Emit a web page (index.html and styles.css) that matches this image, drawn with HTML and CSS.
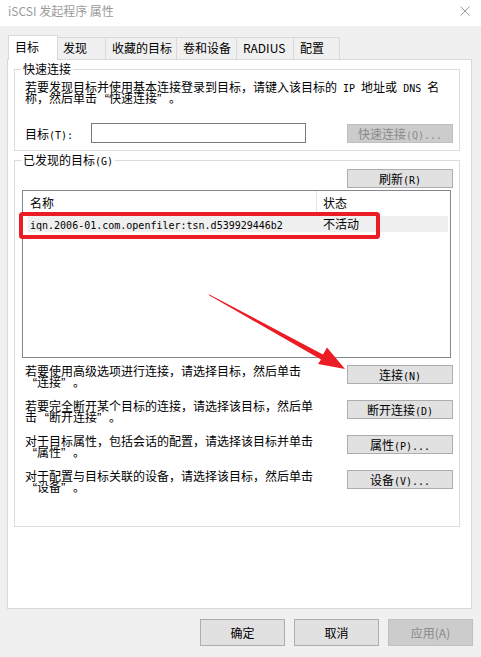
FILE: index.html
```html
<!DOCTYPE html>
<html lang="zh-CN">

<head>
  <meta charset="UTF-8">
  <meta name="viewport" content="width=device-width, initial-scale=1.0">
  <title>iSCSI 发起程序 属性</title>
  <link rel="stylesheet" href="styles.css">
</head>

<body>
  <div class="titlebar">
    <span class="title">iSCSI 发起程序 属性</span>
    <svg class="close" width="10" height="10" viewBox="0 0 10 10">
      <path d="M0.5 0.5 L9.5 9.5 M9.5 0.5 L0.5 9.5" stroke="#9a9a9a" stroke-width="1" fill="none" />
    </svg>
  </div>

  <div class="dialog">
    <div class="tabs">
      <div class="tab active">目标</div>
      <div class="tab t-find">发现</div>
      <div class="tab t-fav">收藏的目标</div>
      <div class="tab t-vol">卷和设备</div>
      <div class="tab t-radius">RADIUS</div>
      <div class="tab t-conf">配置</div>
    </div>

    <div class="panel">
      <fieldset class="group">
        <legend>快速连接</legend>
        <div class="quick-body">
          <p class="lines">若要发现目标并使用基本连接登录到目标，请键入该目标的<span class="en"> IP </span>地址或<span class="en"> DNS </span>名<br>称，然后单击<span class="q ql">“</span>快速连接<span class="q qr">”</span>。</p>
          <div class="quick-row">
            <span class="label">目标<span class="en">(T):</span></span>
            <input type="text" class="target-input">
            <button class="btn off">快速连接<span class="en">(Q)...</span></button>
          </div>
        </div>
      </fieldset>

      <fieldset class="group">
        <legend>已发现的目标<span class="en">(G)</span></legend>
        <div class="found-body">
          <div class="refresh-row">
            <button class="btn">刷新<span class="en">(R)</span></button>
          </div>

          <div class="list">
            <div class="list-head">
              <div class="col-name">名称</div>
              <div class="col-state">状态</div>
            </div>
            <div class="list-row">
              <div class="col-name"><span class="en">iqn.2006-01.com.openfiler:tsn.d539929446b2</span></div>
              <div class="col-state">不活动</div>
            </div>
          </div>

          <div class="actions">
            <div class="action">
              <p class="lines">若要使用高级选项进行连接，请选择目标，然后单击<br><span class="q ql">“</span>连接<span class="q qr">”</span>。</p>
              <button class="btn">连接<span class="en">(N)</span></button>
            </div>
            <div class="action">
              <p class="lines">若要完全断开某个目标的连接，请选择该目标，然后单<br>击<span class="q ql">“</span>断开连接<span class="q qr">”</span>。</p>
              <button class="btn">断开连接<span class="en">(D)</span></button>
            </div>
            <div class="action">
              <p class="lines">对于目标属性，包括会话的配置，请选择该目标并单击<br><span class="q ql">“</span>属性<span class="q qr">”</span>。</p>
              <button class="btn">属性<span class="en">(P)...</span></button>
            </div>
            <div class="action">
              <p class="lines">对于配置与目标关联的设备，请选择该目标，然后单击<br><span class="q ql">“</span>设备<span class="q qr">”</span>。</p>
              <button class="btn">设备<span class="en">(V)...</span></button>
            </div>
          </div>
        </div>
      </fieldset>
    </div>

    <div class="footer">
      <button class="btn big">确定</button>
      <button class="btn big">取消</button>
      <button class="btn big off">应用(A)</button>
    </div>
  </div>

  <!-- annotations drawn over the screenshot -->
  <svg class="marks" width="481" height="657" viewBox="0 0 481 657">
    <rect x="21" y="214" width="357" height="23" rx="1.5" fill="none" stroke="#ec1c24" stroke-width="4" />
    <polygon points="208.5,294 323,354.5 327,347.5 345,369 318,364 321,359.5 209.5,295.5" fill="#ec1c24" />
  </svg>
</body>

</html>
```

FILE: styles.css
```css
* {
  padding: 0;
  margin: 0;
  box-sizing: border-box;
}

body {
  width: 481px;
  height: 657px;
  overflow: hidden;
  background: #f0f0f0;
  color: #000;
  font-family: "Noto Sans CJK SC", sans-serif;
  font-size: 12px;
}

.en {
  font-family: "DejaVu Sans Mono", monospace;
  font-size: 10px;
  line-height: 0;
}

/* full width quote marks, as the old song font draws them */
.q {
  display: inline-block;
  width: 12px;
  line-height: 0;
  font-family: "Liberation Sans", sans-serif;
  font-size: 13px;
}

.ql {
  text-align: right;
}

.qr {
  text-align: left;
}

.titlebar {
  height: 26px;
  background: #fff;
  display: flex;
  justify-content: space-between;
  align-items: flex-start;
  padding: 3px 11px 0 8px;
}

.title {
  color: #9a9a9a;
  line-height: 16px;
}

.close {
  margin-top: 3px;
}

.dialog {
  padding: 9px 9px 0 7px;
}

/* tabs */
.tabs {
  display: flex;
  align-items: flex-end;
  height: 24px;
  margin-left: 1px;
}

.tab {
  height: 22px;
  padding: 2px 0 0 6px;
  line-height: 16px;
  background: #f0f0f0;
  border: 1px solid #d9d9d9;
  border-right: none;
  border-bottom: none;
  white-space: nowrap;
}

.tab.active {
  position: relative;
  z-index: 1;
  width: 50px;
  height: 25px;
  margin-bottom: -1px;
  margin-right: -2px;
  padding-top: 3px;
  background: #fff;
  border-right: 1px solid #d9d9d9;
}

.t-find {
  width: 49px;
}

.t-fav {
  width: 71px;
}

.t-vol {
  width: 60px;
}

.t-radius {
  width: 57px;
}

.t-conf {
  width: 47px;
  border-right: 1px solid #d9d9d9;
}

/* page */
.panel {
  height: 550px;
  background: #fff;
  border: 1px solid #d9d9d9;
  padding: 0 11px 0 6px;
}

.group {
  margin-top: 3px;
  border: 1px solid #dcdcdc;
}

.group legend {
  margin-left: 6px;
  padding: 0 2px;
  line-height: 12px;
}

.lines {
  line-height: 11px;
  white-space: nowrap;
}

.quick-body {
  padding: 6px 6px 7px 10px;
}

.quick-row {
  display: flex;
  align-items: center;
  margin-top: 20px;
}

.label {
  width: 66px;
}

.target-input {
  width: 215px;
  height: 20px;
  border: 1px solid #7a7a7a;
  background: #fff;
  outline: none;
}

.quick-row .btn {
  margin-left: auto;
}

.btn {
  width: 106px;
  height: 19px;
  line-height: 17px;
  border: 1px solid #adadad;
  background: #e1e1e1;
  color: #000;
  font-family: inherit;
  font-size: 12px;
  text-align: center;
  white-space: nowrap;
}

.btn.off {
  background: #cccccc;
  border-color: #bfbfbf;
  color: #8a8a8a;
}

.found-body {
  padding: 3px 6px 34px 7px;
}

.refresh-row {
  display: flex;
  justify-content: flex-end;
}

.list {
  height: 168px;
  margin: 2px 2px 0 0;
  border: 1px solid #828790;
  background: #fff;
}

.list-head {
  display: flex;
  height: 25px;
  line-height: 24px;
}

.list-head .col-name {
  width: 294px;
  height: 24px;
  padding-left: 7px;
  border-right: 1px solid #e5e5e5;
}

.list-head .col-state {
  padding-left: 6px;
}

.list-row {
  display: flex;
  height: 16px;
  line-height: 16px;
  margin: 0 2px 0 5px;
  background: #efefef;
}

.list-row .col-name {
  width: 295px;
  padding-left: 2px;
}

.actions {
  display: flex;
  flex-direction: column;
  gap: 13px;
  margin-top: 7px;
}

.action {
  display: flex;
  justify-content: space-between;
  align-items: flex-start;
}

.action .lines {
  padding-left: 3px;
}

.footer {
  display: flex;
  justify-content: flex-end;
  gap: 9px;
  padding-top: 10px;
  margin-right: -1px;
}

.btn.big {
  width: 85px;
  height: 27px;
  line-height: 25px;
}

.marks {
  position: absolute;
  left: 0;
  top: 0;
  pointer-events: none;
}
```
